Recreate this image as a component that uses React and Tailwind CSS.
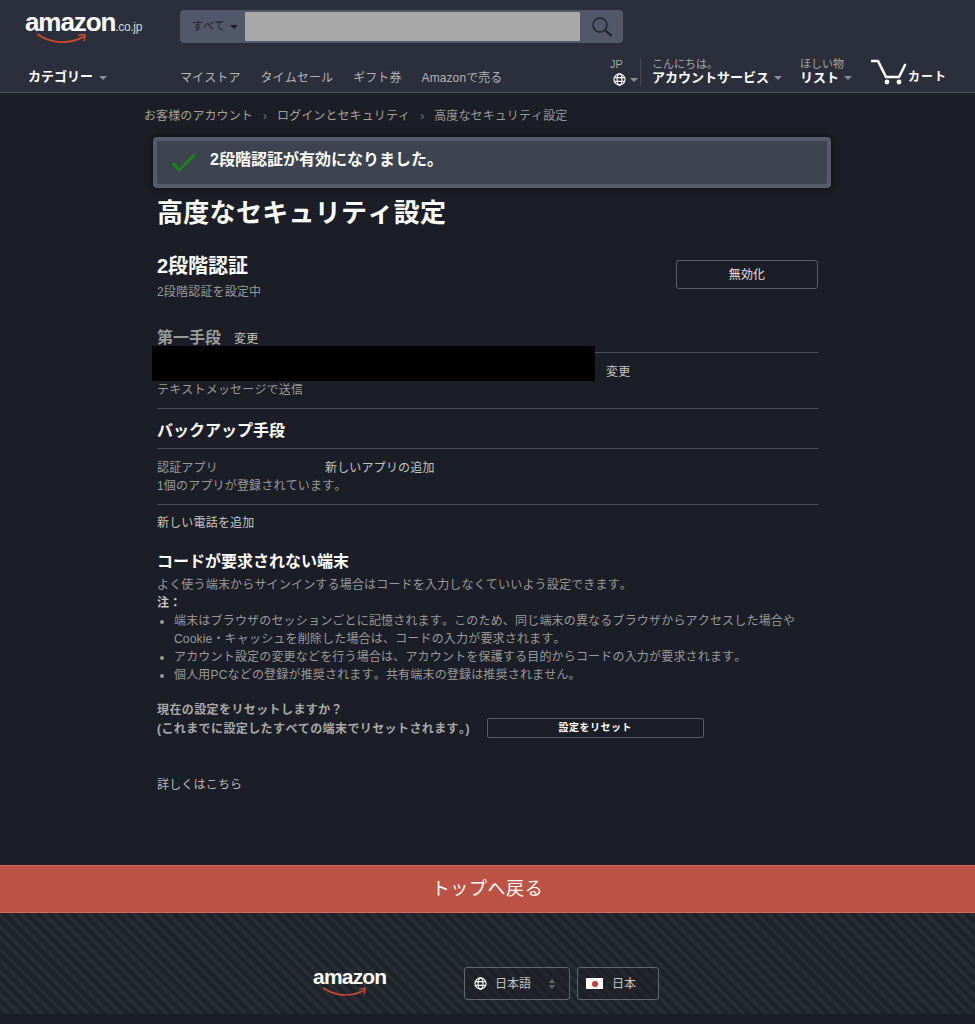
import React from 'react';

const Caret = ({ className = '' }) => (
  <span className={`inline-block w-0 h-0 border-x-[4px] border-x-transparent border-t-[4px] ${className}`} />
);

const Globe = ({ size = 13, className = '' }) => (
  <svg width={size} height={size} viewBox="0 0 14 14" fill="none" stroke="currentColor" strokeWidth="1.2" className={className}>
    <circle cx="7" cy="7" r="6" />
    <ellipse cx="7" cy="7" rx="2.6" ry="6" />
    <path d="M1.4 5h11.2M1.4 9h11.2" />
  </svg>
);

const Smile = ({ width }) => (
  <svg width={width} viewBox="0 0 52 12" fill="none" className="block">
    <path d="M1 1.5C9 7 17 9.5 26 9.5C35 9.5 43 7 49 3.5" stroke="#c8492f" strokeWidth="2" strokeLinecap="round" />
    <path d="M43.5 2.2L50 1.5L49 8" stroke="#c8492f" strokeWidth="1.6" strokeLinecap="round" strokeLinejoin="round" />
  </svg>
);

const Header = () => (
  <header className="h-[93px] bg-[#2b2f3b] border-b border-[#4a505e] flex flex-col shrink-0">
    <div className="flex items-start pt-[10px] h-[61px]">
      <div className="w-[180px] pl-[25px] shrink-0">
        <div className="flex items-baseline h-[24px]">
          <span className="text-[26px] leading-[24px] font-bold text-white tracking-[-1.1px]">amazon</span>
          <span className="text-[12px] leading-[24px] text-[#d5d5d5] tracking-[-0.3px]">.co.jp</span>
        </div>
        <div className="ml-[12px] -mt-[1px]">
          <Smile width={50} />
        </div>
      </div>
      <div className="w-[443px] h-[33px] bg-[#515869] rounded-[4px] flex items-center">
        <div className="w-[65px] pl-[12px] flex items-center gap-[5px] text-[11px] text-[#1c1f27]">
          すべて <Caret className="border-t-[#1c1f27]" />
        </div>
        <div className="flex-1 h-[29px] bg-[#a9a9a9] rounded-[1px]" />
        <div className="w-[43px] flex justify-center text-[#1f222a]">
          <svg width="22" height="22" viewBox="0 0 22 22" fill="none" stroke="currentColor">
            <circle cx="9" cy="9" r="7" strokeWidth="1.4" />
            <path d="M14 14l6.5 6" strokeWidth="2.2" />
          </svg>
        </div>
      </div>
    </div>
    <div className="flex-1 flex items-start relative">
      <div className="w-[180px] pl-[28px] pt-[7px] flex items-center gap-[6px] text-[13px] leading-[18px] font-bold text-white shrink-0">
        カテゴリー <Caret className="border-t-[#8b8f98] mt-[2px]" />
      </div>
      <nav className="flex gap-[20px] pt-[8px] text-[12px] leading-[18px] text-[#b4b4b4] tracking-[0.1px]">
        <span>マイストア</span>
        <span>タイムセール</span>
        <span>ギフト券</span>
        <span>Amazonで売る</span>
      </nav>
      <div className="ml-auto flex items-start -mt-[3px] pr-[28px]">
        <div className="w-[31px] flex flex-col text-[#a5a5a5] border-r border-[#444a57] h-[28px] mr-[11px]">
          <span className="text-[11px] leading-[13px]">JP</span>
          <span className="flex items-center gap-[4px] pl-[3px] mt-[2px] text-white">
            <Globe /> <Caret className="border-t-[#8b8f98]" />
          </span>
        </div>
        <div className="flex flex-col mr-[18px]">
          <span className="text-[11px] leading-[13px] text-[#a5a5a5]">こんにちは。</span>
          <span className="flex items-center gap-[5px] text-[13px] leading-[14px] font-bold text-white">
            アカウントサービス <Caret className="border-t-[#8b8f98]" />
          </span>
        </div>
        <div className="flex flex-col mr-[19px]">
          <span className="text-[11px] leading-[13px] text-[#a5a5a5]">ほしい物</span>
          <span className="flex items-center gap-[5px] text-[13px] leading-[14px] font-bold text-white">
            リスト <Caret className="border-t-[#8b8f98]" />
          </span>
        </div>
        <div className="flex items-end mt-[1px]">
          <svg width="37" height="27" viewBox="0 0 37 27" fill="none" className="text-white -mt-[1px]">
            <path d="M1 3h6l8 16h13l6-12" stroke="currentColor" strokeWidth="2.6" strokeLinejoin="round" strokeLinecap="round" />
            <circle cx="16" cy="24" r="2.4" fill="currentColor" />
            <circle cx="28" cy="24" r="2.4" fill="currentColor" />
          </svg>
          <span className="text-[12px] leading-[16px] font-bold text-white ml-[0px] tracking-[1px]">カート</span>
        </div>
      </div>
    </div>
  </header>
);

const Divider = ({ className = '' }) => <div className={`h-px bg-[#4b4f58] ${className}`} />;

const Main = () => (
  <main className="flex-1 pl-[144px] pr-[144px] text-[12px] leading-[18px] text-[#9a9a9a] tracking-[0.18px]">
    <div className="flex items-center h-[18px] mt-[14px] text-[#a99f92] tracking-[0.1px]">
      <span>お客様のアカウント</span>
      <span className="mx-[10px] text-[#777]">›</span>
      <span>ログインとセキュリティ</span>
      <span className="mx-[10px] text-[#777]">›</span>
      <span className="text-[#999]">高度なセキュリティ設定</span>
    </div>

    <div className="ml-[9px] w-[678px] h-[51px] mt-[12px] bg-[#3e4350] border-[4px] border-[#565c6c] rounded-[4px] shadow-[0_0_6px_rgba(0,0,0,0.6)] flex items-center pl-[15px]">
      <svg width="26" height="20" viewBox="0 0 26 20" fill="none" className="-mt-[1px] -ml-[1px]">
        <path d="M2 11l6.5 7L24 2" stroke="#128a12" strokeWidth="2.6" />
      </svg>
      <span className="ml-[13px] -mt-[6px] text-[16px] leading-[20px] font-bold text-white tracking-normal">2段階認証が有効になりました。</span>
    </div>

    <div className="ml-[13px] w-[661px]">
      <h1 className="mt-[7px] text-[26px] leading-[36px] font-bold text-white tracking-[0.3px]">高度なセキュリティ設定</h1>

      <div className="flex justify-between items-start mt-[21px]">
        <div>
          <h2 className="text-[20px] leading-[28px] font-bold text-white tracking-normal">2段階認証</h2>
          <p className="mt-[3px]">2段階認証を設定中</p>
        </div>
        <button className="w-[142px] h-[29px] mt-[8px] border border-[#5b5f68] rounded-[3px] text-[12px] text-[#e2e2e2]">無効化</button>
      </div>

      <div className="flex items-baseline mt-[25px]">
        <h3 className="text-[16px] leading-[24px] font-bold text-[#9a9a9a] tracking-normal">第一手段</h3>
        <span className="ml-[13px] text-[#c4c4c4]">変更</span>
      </div>
      <div className="relative">
        <Divider className="mt-[2px]" />
        <div className="absolute left-[-5px] top-[-6px] w-[443px] h-[35px] bg-black" />
        <div className="pl-[449px] pt-[10px] text-[#c4c4c4]">変更</div>
        <p>テキストメッセージで送信</p>
      </div>
      <Divider className="mt-[9px]" />

      <h3 className="mt-[10px] text-[16px] leading-[24px] font-bold text-white tracking-normal">バックアップ手段</h3>
      <Divider className="mt-[5px]" />
      <div className="flex mt-[10px]">
        <span className="w-[168px]">認証アプリ</span>
        <span className="text-[#c4c4c4]">新しいアプリの追加</span>
      </div>
      <p>1個のアプリが登録されています。</p>
      <Divider className="mt-[9px]" />
      <p className="mt-[9px] text-[#c4c4c4]">新しい電話を追加</p>

      <h3 className="mt-[18px] text-[16px] leading-[24px] font-bold text-white tracking-normal">コードが要求されない端末</h3>
      <p className="mt-[2px]">よく使う端末からサインインする場合はコードを入力しなくていいよう設定できます。</p>
      <p className="font-bold text-[#c4c4c4]">注：</p>
      <ul className="list-disc pl-[17px]">
        <li>端末はブラウザのセッションごとに記憶されます。このため、同じ端末の異なるブラウザからアクセスした場合やCookie・キャッシュを削除した場合は、コードの入力が要求されます。</li>
        <li>アカウント設定の変更などを行う場合は、アカウントを保護する目的からコードの入力が要求されます。</li>
        <li>個人用PCなどの登録が推奨されます。共有端末の登録は推奨されません。</li>
      </ul>

      <div className="flex items-end mt-[17px]">
        <p className="font-bold text-[#a9a9a9] leading-[19px] tracking-[0.4px]">
          現在の設定をリセットしますか？
          <br />
          (これまでに設定したすべての端末でリセットされます。)
        </p>
        <button className="ml-[17px] w-[217px] h-[20px] border border-[#5b5f68] rounded-[2px] text-[10px] leading-[16px] font-bold text-white mb-[1px] tracking-[0.5px]">設定をリセット</button>
      </div>

      <p className="mt-[37px] text-[#b8b8b8]">詳しくはこちら</p>
    </div>
  </main>
);

const Footer = () => (
  <footer className="shrink-0">
    <div className="h-[48px] bg-[#bd5246] border-y border-[#d8695c] flex items-center justify-center text-[18px] text-white tracking-[0.6px]">
      トップへ戻る
    </div>
    <div className="h-[101px] bg-[repeating-linear-gradient(45deg,#1e2329_0,#1e2329_4px,#272b34_4px,#272b34_8px)] flex items-start justify-center pt-[54px]">
      <div className="flex items-start mr-[3px]">
        <div className="w-[151px] -mt-[1px]">
          <div className="text-[21px] leading-[22px] font-bold text-white tracking-[-0.8px]">amazon</div>
          <div className="ml-[10px] -mt-[1px]">
            <Smile width={44} />
          </div>
        </div>
        <div className="w-[106px] h-[33px] border border-[#62666e] rounded-[3px] flex items-center pl-[9px] text-[12px] text-[#c4c4c4] bg-[#1b1e26]/40">
          <Globe className="text-white" />
          <span className="ml-[8px]">日本語</span>
          <svg width="6" height="10" viewBox="0 0 6 10" className="ml-[18px]" fill="#666">
            <path d="M3 0l3 4H0zM3 10L0 6h6z" />
          </svg>
        </div>
        <div className="w-[82px] h-[33px] ml-[7px] border border-[#62666e] rounded-[3px] flex items-center pl-[8px] text-[12px] text-[#c4c4c4] bg-[#1b1e26]/40">
          <span className="w-[17px] h-[11px] bg-white flex items-center justify-center">
            <span className="w-[6px] h-[6px] rounded-full bg-[#c8382e]" />
          </span>
          <span className="ml-[9px]">日本</span>
        </div>
      </div>
    </div>
    <div className="h-[10px]" />
  </footer>
);

export default function App() {
  return (
    <div className="h-[1024px] overflow-hidden bg-[#1b1e26] flex flex-col [font-kerning:none] font-['Liberation_Sans','Noto_Sans_CJK_JP',sans-serif]">
      <Header />
      <Main />
      <Footer />
    </div>
  );
}
